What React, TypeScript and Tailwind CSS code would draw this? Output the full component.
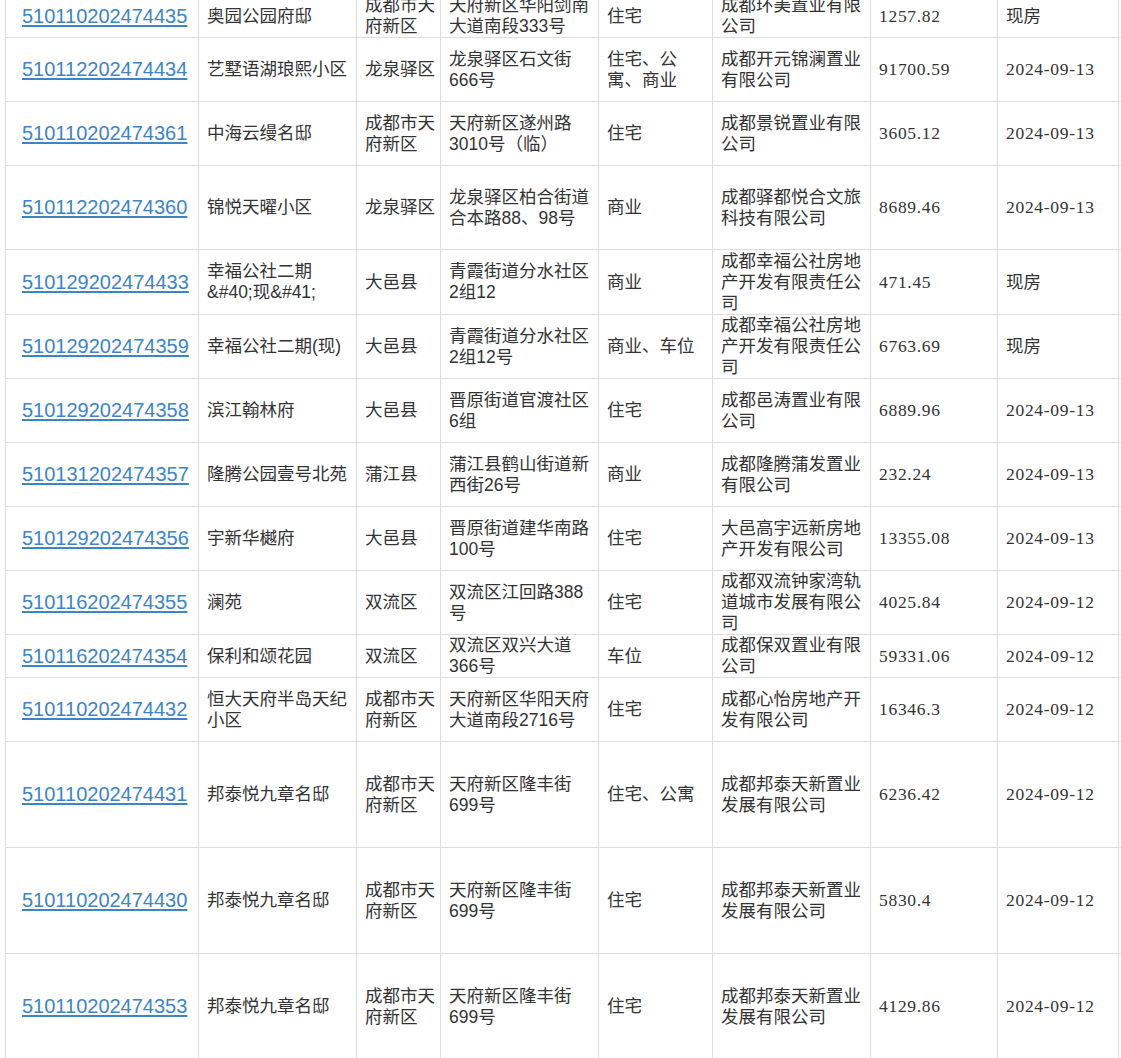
const rows: { id: string; name: string; area: string; addr: string; use: string; corp: string; size: string; date: string; h: string }[] = [
  { id: "510110202474435", name: "奥园公园府邸", area: "成都市天府新区", addr: "天府新区华阳剑南大道南段333号", use: "住宅", corp: "成都环美置业有限公司", size: "1257.82", date: "现房", h: "h-[43px]" },
  { id: "510112202474434", name: "艺墅语湖琅熙小区", area: "龙泉驿区", addr: "龙泉驿区石文街666号", use: "住宅、公寓、商业", corp: "成都开元锦澜置业有限公司", size: "91700.59", date: "2024-09-13", h: "h-[64px]" },
  { id: "510110202474361", name: "中海云缦名邸", area: "成都市天府新区", addr: "天府新区遂州路3010号（临）", use: "住宅", corp: "成都景锐置业有限公司", size: "3605.12", date: "2024-09-13", h: "h-[64px]" },
  { id: "510112202474360", name: "锦悦天曜小区", area: "龙泉驿区", addr: "龙泉驿区柏合街道合本路88、98号", use: "商业", corp: "成都驿都悦合文旅科技有限公司", size: "8689.46", date: "2024-09-13", h: "h-[84px]" },
  { id: "510129202474433", name: "幸福公社二期&#40;现&#41;", area: "大邑县", addr: "青霞街道分水社区2组12", use: "商业", corp: "成都幸福公社房地产开发有限责任公司", size: "471.45", date: "现房", h: "h-[65px]" },
  { id: "510129202474359", name: "幸福公社二期(现)", area: "大邑县", addr: "青霞街道分水社区2组12号", use: "商业、车位", corp: "成都幸福公社房地产开发有限责任公司", size: "6763.69", date: "现房", h: "h-[64px]" },
  { id: "510129202474358", name: "滨江翰林府", area: "大邑县", addr: "晋原街道官渡社区6组", use: "住宅", corp: "成都邑涛置业有限公司", size: "6889.96", date: "2024-09-13", h: "h-[64px]" },
  { id: "510131202474357", name: "隆腾公园壹号北苑", area: "蒲江县", addr: "蒲江县鹤山街道新西街26号", use: "商业", corp: "成都隆腾蒲发置业有限公司", size: "232.24", date: "2024-09-13", h: "h-[64px]" },
  { id: "510129202474356", name: "宇新华樾府", area: "大邑县", addr: "晋原街道建华南路100号", use: "住宅", corp: "大邑高宇远新房地产开发有限公司", size: "13355.08", date: "2024-09-13", h: "h-[64px]" },
  { id: "510116202474355", name: "澜苑", area: "双流区", addr: "双流区江回路388号", use: "住宅", corp: "成都双流钟家湾轨道城市发展有限公司", size: "4025.84", date: "2024-09-12", h: "h-[64px]" },
  { id: "510116202474354", name: "保利和颂花园", area: "双流区", addr: "双流区双兴大道366号", use: "车位", corp: "成都保双置业有限公司", size: "59331.06", date: "2024-09-12", h: "h-[43px]" },
  { id: "510110202474432", name: "恒大天府半岛天纪小区", area: "成都市天府新区", addr: "天府新区华阳天府大道南段2716号", use: "住宅", corp: "成都心怡房地产开发有限公司", size: "16346.3", date: "2024-09-12", h: "h-[64px]" },
  { id: "510110202474431", name: "邦泰悦九章名邸", area: "成都市天府新区", addr: "天府新区隆丰街699号", use: "住宅、公寓", corp: "成都邦泰天新置业发展有限公司", size: "6236.42", date: "2024-09-12", h: "h-[106px]" },
  { id: "510110202474430", name: "邦泰悦九章名邸", area: "成都市天府新区", addr: "天府新区隆丰街699号", use: "住宅", corp: "成都邦泰天新置业发展有限公司", size: "5830.4", date: "2024-09-12", h: "h-[106px]" },
  { id: "510110202474353", name: "邦泰悦九章名邸", area: "成都市天府新区", addr: "天府新区隆丰街699号", use: "住宅", corp: "成都邦泰天新置业发展有限公司", size: "4129.86", date: "2024-09-12", h: "h-[106px]" },
];

const cell = "flex items-center border-r border-[#ddd] pl-2 pr-[3px]";
const cjk = "font-['Liberation_Sans','Noto_Sans_CJK_SC',sans-serif]";
const num = "font-['Liberation_Serif','Noto_Sans_CJK_SC',serif] tracking-[0.7px]";

const App = () => {
  return (
    <div className="w-[1121px] h-[1058px] overflow-hidden bg-white">
      <div className="-mt-[6px] ml-[5px] w-[1300px] border-t border-l border-[#ddd] text-[17.5px] leading-[21px] text-[#333]">
        {rows.map((r) => (
          <div
            key={r.id}
            className={`grid grid-cols-[193px_158px_84px_158px_114px_158px_127px_121px_180px] border-b border-[#ddd] ${r.h}`}
          >
            <div className="flex items-center border-r border-[#ddd] pl-4">
              <a className="font-['Liberation_Sans',sans-serif] text-[20px] leading-[23px] text-[#3d85c6] underline underline-offset-[2px]">
                {r.id}
              </a>
            </div>
            <div className={`${cell} ${cjk}`}>{r.name}</div>
            <div className={`${cell} ${cjk}`}>{r.area}</div>
            <div className={`${cell} ${cjk}`}>{r.addr}</div>
            <div className={`${cell} ${cjk}`}>{r.use}</div>
            <div className={`${cell} ${cjk}`}>{r.corp}</div>
            <div className={`${cell} ${num}`}>{r.size}</div>
            <div className={`${cell} ${r.date === "现房" ? cjk : num}`}>{r.date}</div>
            <div className={cell}></div>
          </div>
        ))}
      </div>
    </div>
  );
};

export default App;
